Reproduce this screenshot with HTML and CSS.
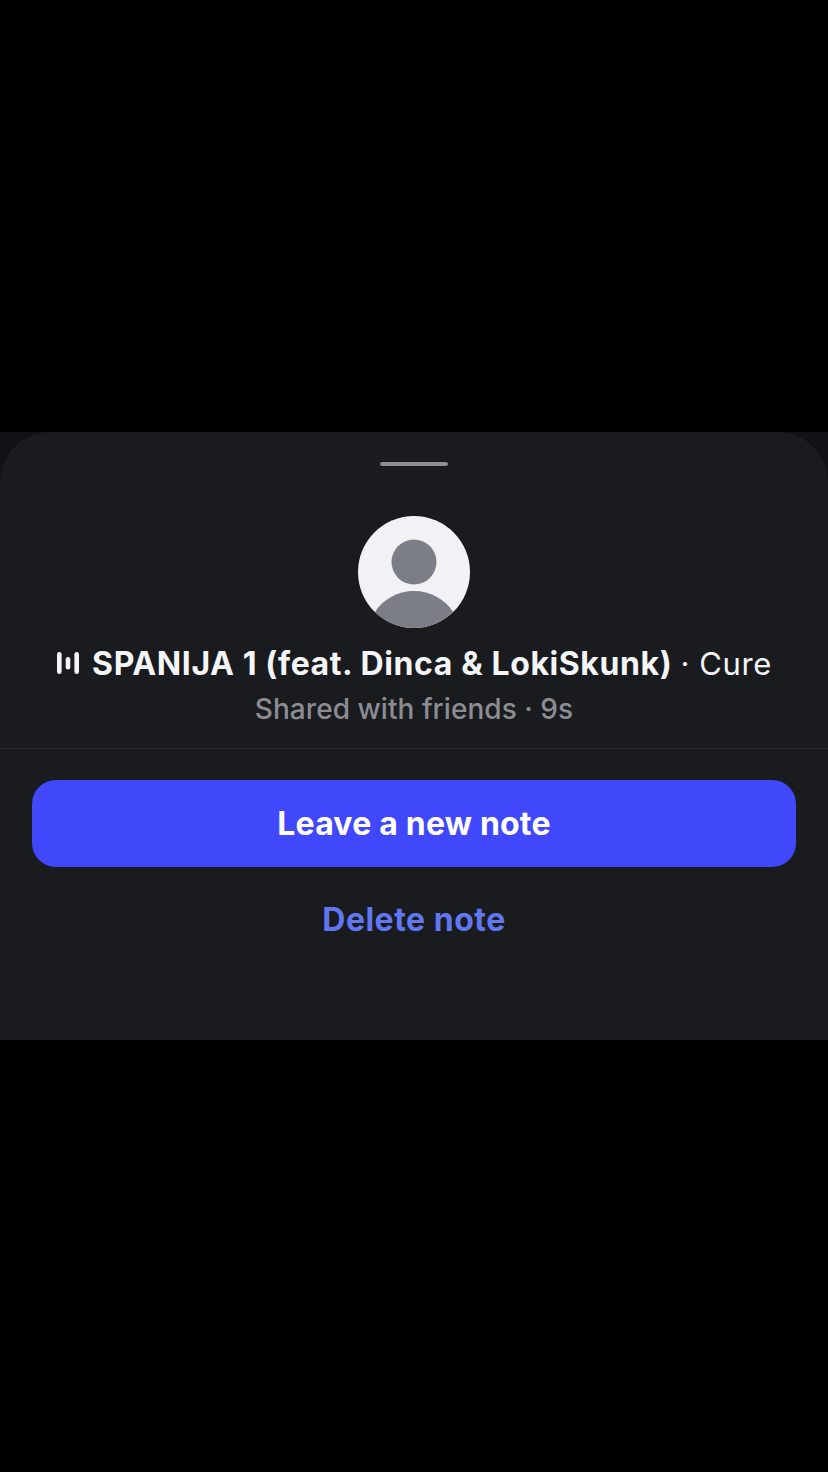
FILE: index.html
```html
<!DOCTYPE html>
<html lang="en">

<head>
    <meta charset="UTF-8">
    <meta name="viewport" content="width=device-width, initial-scale=1.0">
    <title>Note</title>
    <link rel="stylesheet" href="styles.css">
</head>

<body>
    <div class="backdrop">
        <div class="sheet">
            <div class="handle"></div>
            <svg class="avatar" width="112" height="112" viewBox="0 0 112 112">
                <circle cx="56" cy="56" r="56" fill="#f1f2f5" />
                <circle cx="56" cy="46" r="22.5" fill="#7b7e87" />
                <path d="M17 96 C25 83 40 75 56 75 C72 75 87 83 95 96 C85 106 71 112 56 112 C41 112 27 106 17 96 Z" fill="#7b7e87" />
            </svg>
            <div class="song">
                <svg class="bars" width="24" height="24" viewBox="0 0 24 24">
                    <rect x="1" y="1" width="4.6" height="22" rx="2.3" />
                    <rect x="9.7" y="6" width="4.6" height="12.5" rx="2.3" />
                    <rect x="18.4" y="1" width="4.6" height="22" rx="2.3" />
                </svg>
                <span class="title">SPANIJA 1 (feat. Dinca &amp; LokiSkunk)</span>
                <span class="artist">· Cure</span>
            </div>
            <div class="shared">Shared with friends · 9s</div>
            <div class="actions">
                <button class="btn-primary">Leave a new note</button>
                <button class="btn-link">Delete note</button>
            </div>
        </div>
    </div>
</body>

</html>
```

FILE: styles.css
```css
/* General styles */
body {
    margin: 0;
    background: #000000;
    font-family: 'Inter', sans-serif;
    height: 1472px;
    overflow: hidden;
}

.backdrop {
    margin-top: 432px;
    background: #111216;
}

.sheet {
    height: 608px;
    background: #1a1b1f;
    border-radius: 50px 50px 0 0;
    display: flex;
    flex-direction: column;
    align-items: center;
}

.handle {
    width: 68px;
    height: 4px;
    border-radius: 2px;
    background: #8e9099;
    margin-top: 30px;
}

.avatar {
    margin-top: 50px;
    display: block;
}

.song {
    display: flex;
    align-items: center;
    gap: 12px;
    margin-top: 17px;
    height: 36px;
    font-size: 32px;
    letter-spacing: 0.6px;
    color: #f4f5f7;
    white-space: nowrap;
}

.bars {
    fill: #f4f5f7;
}

.title {
    font-weight: 700;
}

.artist {
    font-weight: 400;
    font-size: 31px;
    margin-left: -4px;
}

.shared {
    margin-top: 10px;
    height: 36px;
    line-height: 36px;
    font-size: 28px;
    font-weight: 500;
    letter-spacing: 0.05px;
    color: #8b8d93;
}

.actions {
    align-self: stretch;
    border-top: 1px solid #2a2b30;
    margin-top: 21px;
    padding: 31px 32px 0;
    display: flex;
    flex-direction: column;
}

.btn-primary {
    height: 87px;
    border: none;
    border-radius: 24px;
    background: #4148fb;
    color: #ffffff;
    font-family: inherit;
    font-size: 32px;
    font-weight: 700;
    letter-spacing: 0.2px;
}

.btn-link {
    margin-top: 30px;
    height: 44px;
    border: none;
    background: none;
    color: #6077f2;
    font-family: inherit;
    font-size: 32px;
    font-weight: 700;
    letter-spacing: 0.5px;
}
```
